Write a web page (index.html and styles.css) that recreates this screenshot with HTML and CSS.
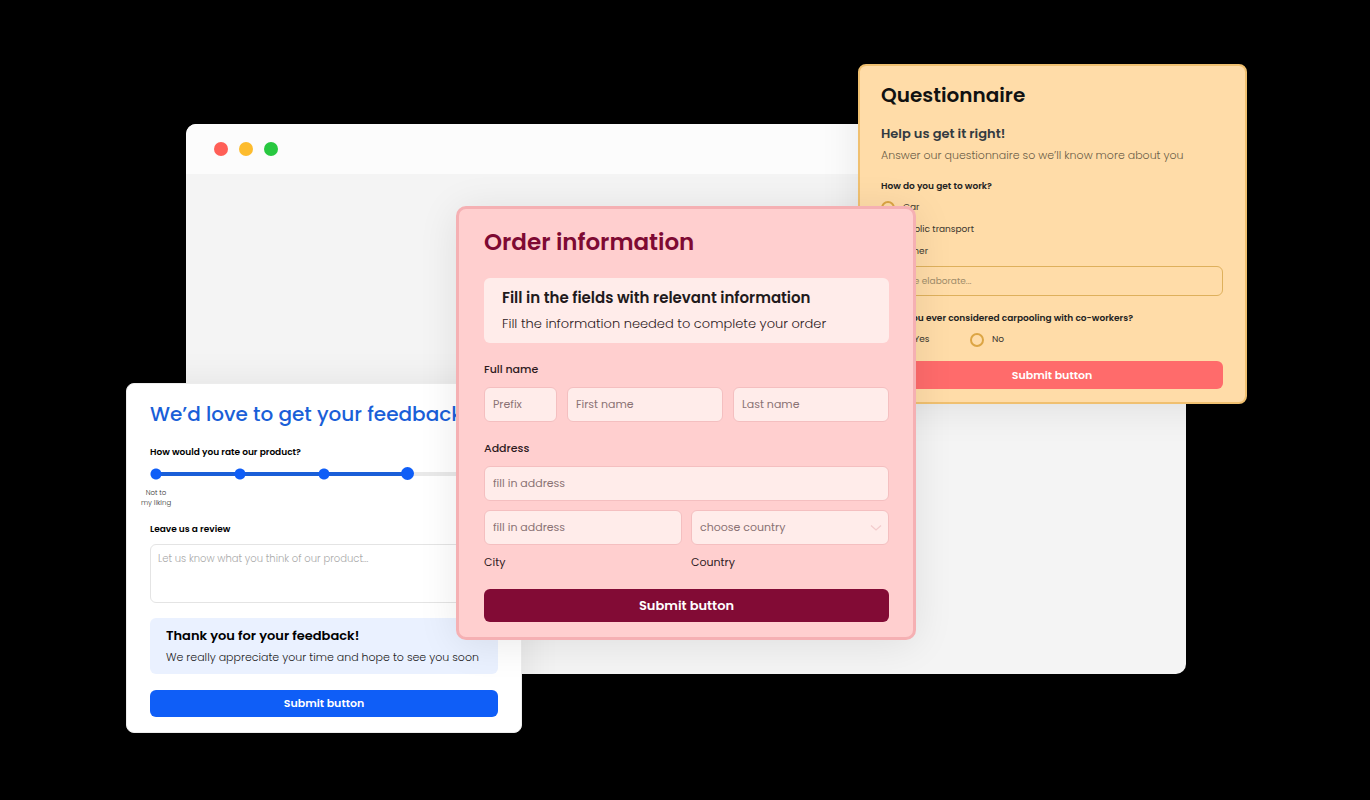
FILE: index.html
```
<!DOCTYPE html>
<html lang="en">
<head>
    <meta charset="UTF-8">
    <meta name="viewport" content="width=device-width, initial-scale=1.0">
    <title>Form templates</title>
    <link rel="stylesheet" href="styles.css">
</head>
<body>
    <main class="scene">
        <div class="browser">
            <div class="browser-bar">
                <span class="dot dot-red"></span>
                <span class="dot dot-yellow"></span>
                <span class="dot dot-green"></span>
            </div>
        </div>

        <form class="card questionnaire">
            <h2>Questionnaire</h2>
            <h3>Help us get it right!</h3>
            <p class="intro">Answer our questionnaire so we’ll know more about you</p>

            <fieldset>
                <legend>How do you get to work?</legend>
                <label class="choice"><input type="radio" name="commute"> Car</label>
                <label class="choice"><input type="radio" name="commute"> Public transport</label>
                <label class="choice"><input type="radio" name="commute"> Other</label>
            </fieldset>
            <input class="elaborate" type="text" placeholder="Please elaborate..." aria-label="Please elaborate">

            <fieldset>
                <legend>Have you ever considered carpooling with co-workers?</legend>
                <div class="choice-row">
                    <label class="choice"><input type="radio" name="carpool"> Yes</label>
                    <label class="choice"><input type="radio" name="carpool"> No</label>
                </div>
            </fieldset>
            <button type="button">Submit button</button>
        </form>

        <form class="card feedback">
            <h2>We’d love to get your feedback!</h2>

            <label for="rating">How would you rate our product?</label>
            <input type="range" id="rating" min="1" max="5" value="4">
            <p class="scale-label">Not to my liking</p>

            <label for="review">Leave us a review</label>
            <textarea id="review" placeholder="Let us know what you think of our product..."></textarea>

            <div class="note">
                <h3>Thank you for your feedback!</h3>
                <p>We really appreciate your time and hope to see you soon</p>
            </div>
            <button type="button">Submit button</button>
        </form>

        <form class="card order">
            <h2>Order information</h2>
            <div class="note">
                <h3>Fill in the fields with relevant information</h3>
                <p>Fill the information needed to complete your order</p>
            </div>

            <label for="prefix">Full name</label>
            <div class="name-row">
                <input type="text" id="prefix" placeholder="Prefix">
                <input type="text" placeholder="First name" aria-label="First name">
                <input type="text" placeholder="Last name" aria-label="Last name">
            </div>

            <label for="address">Address</label>
            <input type="text" id="address" placeholder="fill in address">
            <div class="place-row">
                <div>
                    <input type="text" id="city" placeholder="fill in address">
                    <label class="caption" for="city">City</label>
                </div>
                <div>
                    <div class="select-wrap">
                        <select id="country">
                            <option>choose country</option>
                        </select>
                        <svg class="chevron" viewBox="0 0 12 8" aria-hidden="true">
                            <path d="M1 1.5 L6 6 L11 1.5" fill="none" stroke="#f3cccd" stroke-width="1.3"/>
                        </svg>
                    </div>
                    <label class="caption" for="country">Country</label>
                </div>
            </div>
            <button type="button">Submit button</button>
        </form>
    </main>
</body>
</html>
```
FILE: styles.css
```
* {
    box-sizing: border-box;
}

body {
    margin: 0;
    padding: 64px 20px;
    background: #000;
    color: #111;
    font-family: Poppins, Inter, sans-serif;
    font-size: 10px;
}

h2,
h3,
p {
    margin: 0;
    font-weight: 400;
}

input,
select,
textarea,
button {
    display: block;
    width: 100%;
    margin: 0;
    font-family: inherit;
    font-size: inherit;
}

button {
    border: none;
    border-radius: 6px;
    color: #fff;
    font-weight: 600;
    cursor: pointer;
}

fieldset {
    margin: 0;
    padding: 0;
    border: none;
}

legend {
    padding: 0;
}

/* overlapping windows, centred on the page */
.scene {
    position: relative;
    max-width: 1120px;
    min-height: 669px;
    margin: 0 auto;
    left: 1px;
}

.browser {
    position: absolute;
    top: 60px;
    left: 60px;
    right: 60px;
    height: 550px;
    border-radius: 10px;
    background: #f4f4f4;
    overflow: hidden;
}

.browser-bar {
    display: flex;
    align-items: center;
    gap: 11px;
    height: 50px;
    padding: 0 28px;
    background: #fcfcfc;
}

.dot {
    width: 14px;
    height: 14px;
    border-radius: 50%;
}

.dot-red {
    background: #ff5f57;
}

.dot-yellow {
    background: #fdbc2e;
}

.dot-green {
    background: #28c840;
}

.card {
    position: absolute;
    border-radius: 8px;
    box-shadow: 0 4px 40px rgba(0, 0, 0, 0.09);
}

/* questionnaire */
.questionnaire {
    top: 0;
    right: -1px;
    width: 389px;
    padding: 16px 22px 13px 21px;
    border: 2px solid #f0c070;
    background: #ffdca8;
    color: #3b362e;
    font-size: 9px;
}

.questionnaire h2 {
    color: #111;
    font-size: 20px;
    font-weight: 600;
    line-height: 26px;
}

.questionnaire h3 {
    margin-top: 16px;
    color: #333a40;
    font-size: 13px;
    font-weight: 600;
    line-height: 20px;
}

.intro {
    margin-top: 1px;
    color: #6b5d47;
    font-size: 11px;
    font-weight: 300;
    line-height: 20px;
}

.questionnaire legend {
    padding-top: 14px;
    color: #222;
    font-weight: 600;
    line-height: 14px;
}

.choice {
    display: flex;
    align-items: center;
    gap: 8px;
    height: 22px;
    padding-top: 1px;
}

.choice input {
    width: 14px;
    height: 14px;
    border: 2px solid #dca544;
    border-radius: 50%;
    appearance: none;
}

.choice-row {
    display: grid;
    grid-template-columns: 78px 1fr;
    margin: 3px 0 11px;
    padding-left: 11px;
}

.questionnaire legend + .choice {
    margin-top: 3px;
}

.elaborate {
    height: 30px;
    margin: 4px 0 1px;
    padding: 0 8px;
    border: 1px solid #deb05c;
    border-radius: 6px;
    background: transparent;
}

.elaborate::placeholder {
    color: #a08c6a;
}

.questionnaire button {
    height: 28px;
    background: #ff6b6b;
    font-size: 11px;
}

/* feedback */
.feedback {
    left: 0;
    bottom: 0;
    width: 396px;
    padding: 16px 23px 15px;
    border: 1px solid #ececec;
    background: #fff;
}

.feedback h2 {
    color: #1a5fd8;
    font-size: 20px;
    font-weight: 500;
    line-height: 28px;
    white-space: nowrap;
}

.feedback label {
    display: block;
    margin-top: 16px;
    color: #000;
    font-size: 9px;
    font-weight: 600;
    line-height: 16px;
}

/* filled track with a dot at each step already passed */
.feedback input[type="range"] {
    height: 13px;
    margin-top: 7px;
    appearance: none;
    background:
        radial-gradient(circle, #0f5ef7 5px, transparent 6px) 0 50% / 12px 12px no-repeat,
        radial-gradient(circle, #0f5ef7 5px, transparent 6px) 25% 50% / 12px 12px no-repeat,
        radial-gradient(circle, #0f5ef7 5px, transparent 6px) 50% 50% / 12px 12px no-repeat,
        linear-gradient(#1a5fd8, #1a5fd8) 6px 50% / 72% 4px no-repeat,
        linear-gradient(#e9e9e9, #e9e9e9) 6px 50% / 96% 4px no-repeat;
}

.feedback input[type="range"]::-webkit-slider-thumb {
    width: 13px;
    height: 13px;
    border: none;
    border-radius: 50%;
    appearance: none;
    background: #0f5ef7;
}

.scale-label {
    width: 32px;
    margin: 8px 0 0 -10px;
    color: #333;
    font-size: 7px;
    font-weight: 300;
    line-height: 10px;
    text-align: center;
}

.feedback .scale-label + label {
    margin-top: 13px;
}

.feedback textarea {
    height: 59px;
    margin-top: 7px;
    padding: 6px 7px;
    border: 1px solid #e4e4e4;
    border-radius: 6px;
    resize: none;
}

.feedback textarea::placeholder {
    color: #aaa;
    font-weight: 300;
}

.feedback .note {
    margin: 15px 0 16px;
    padding: 7px 16px 6px;
    border-radius: 6px;
    background: #eaf1ff;
}

.feedback .note h3 {
    color: #000;
    font-size: 13px;
    font-weight: 600;
    line-height: 22px;
}

.feedback .note p {
    color: #222;
    font-size: 11px;
    font-weight: 300;
    line-height: 21px;
    white-space: nowrap;
}

.feedback button {
    height: 27px;
    background: #0f5ef7;
    font-size: 11px;
}

/* order */
.order {
    top: 142px;
    left: 50%;
    width: 460px;
    margin-left: -230px;
    padding: 17px 24px 15px 25px;
    border: 3px solid #f5b0b3;
    border-radius: 10px;
    background: #ffcfcf;
    color: #2e1a1e;
}

.order h2 {
    color: #7e0a33;
    font-size: 23px;
    font-weight: 600;
    line-height: 32px;
}

.order .note {
    margin-top: 20px;
    padding: 7px 18px;
    border-radius: 6px;
    background: #ffecea;
}

.order .note h3 {
    color: #221a1c;
    font-size: 15px;
    font-weight: 600;
    line-height: 26px;
    white-space: nowrap;
}

.order .note p {
    font-size: 13px;
    font-weight: 300;
    line-height: 25px;
}

.order label {
    display: block;
    margin: 17px 0 9px;
    font-size: 11px;
    font-weight: 500;
    line-height: 18px;
}

.order input,
.order select {
    height: 35px;
    padding: 0 8px 1px;
    border: 1px solid #f4bfc0;
    border-radius: 6px;
    background: #ffecea;
    color: #8a7274;
    font-size: 11px;
    appearance: none;
}

.order input::placeholder {
    color: #8a7274;
}

.name-row {
    display: grid;
    grid-template-columns: 73px 1fr 1fr;
    gap: 10px;
}

.place-row {
    display: grid;
    grid-template-columns: 1fr 1fr;
    gap: 9px;
    margin-top: 9px;
}

.select-wrap {
    position: relative;
}

.chevron {
    position: absolute;
    top: 14px;
    right: 7px;
    width: 12px;
    height: 8px;
    pointer-events: none;
}

.order .caption {
    margin: 8px 0 18px;
    font-weight: 400;
}

.order button {
    height: 33px;
    background: #820b35;
    font-size: 13px;
}
```
